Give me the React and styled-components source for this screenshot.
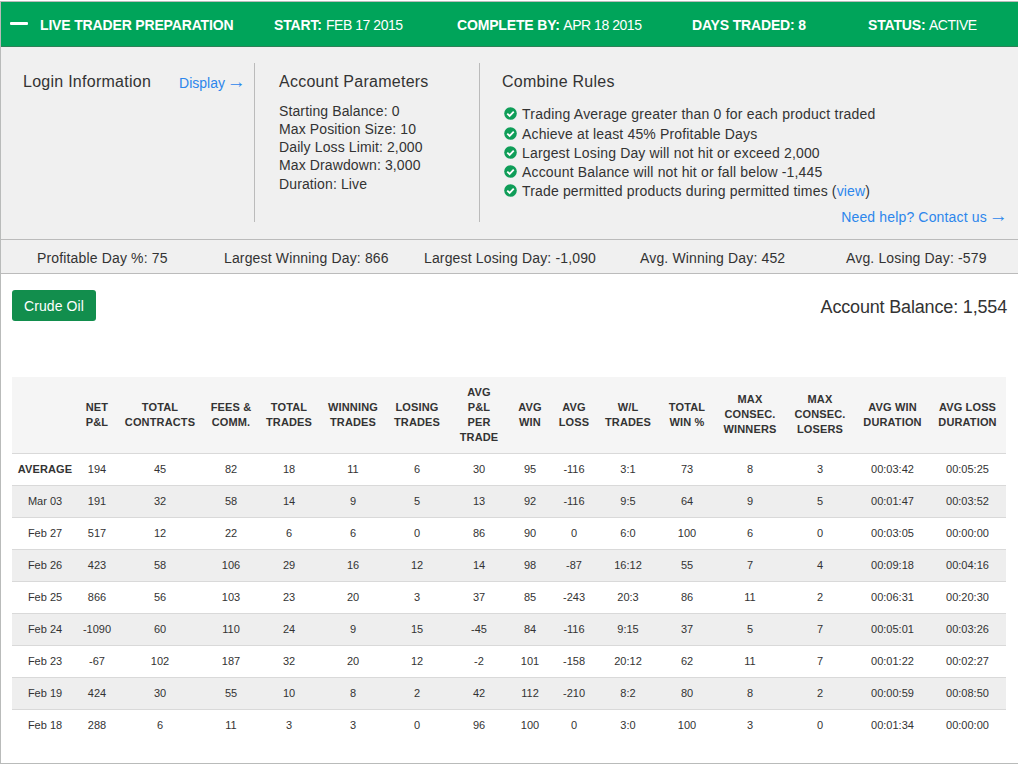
import React from 'react';
import styled, { createGlobalStyle, css } from 'styled-components';

const GlobalStyle = createGlobalStyle`
    * {
        box-sizing: border-box;
    }
    body {
        margin: 0;
        background: #fff;
        color: #333;
        font-family: "Liberation Sans", Arial, sans-serif;
        font-size: 14px;
        letter-spacing: 0.15px;
    }
`;

const Panel = styled.div`
    height: 763px;
    margin-top: 1px;
    border: 1px solid #b9bbba;
    border-right: 0;
    background: #fff;
`;

const TopBar = styled.div`
    display: flex;
    align-items: center;
    height: 45px;
    background: #00a45a;
    border-bottom: 1px solid #2d8157;
    color: #fff;
    white-space: nowrap;
`;

const Collapse = styled.div`
    width: 18px;
    height: 3px;
    margin: 0 12px 1px 9px;
    border-radius: 1px;
    background: #fff;
`;

const TopItem = styled.div`
    width: ${props => props.width}px;
    padding-top: 2px;
    letter-spacing: -0.46px;
    b {
        margin-right: 0.8px;
        letter-spacing: -0.16px;
    }
`;

const Info = styled.div`
    display: flex;
    height: 192px;
    padding: 16px 0 17px;
    background: #f0f0f0;
`;

const Column = styled.div`
    padding-top: 10px;
    line-height: 18.2px;
    ${props => props.divider && css`
        border-right: 1px solid #bbb;
    `}
`;

const LoginColumn = styled(Column)`
    display: flex;
    width: 254px;
    padding-left: 22px;
`;

const ParamsColumn = styled(Column)`
    width: 225px;
    padding-left: 24px;
`;

const RulesColumn = styled(Column)`
    flex: 1;
    padding-left: 22px;
`;

const Title = styled.div`
    font-size: 16px;
    line-height: 18px;
    letter-spacing: 0.26px;
`;

const Link = styled.a`
    color: #2c86ec;
`;

const DisplayLink = styled(Link)`
    margin: 1px 0 0 28px;
    letter-spacing: 0;
    white-space: nowrap;
`;

const Arrow = styled.span`
    margin-left: -2px;
    font-size: 19px;
    line-height: 0;
`;

const Params = styled.div`
    margin-top: 10.85px;
    letter-spacing: 0.12px;
`;

const Rules = styled.div`
    margin-top: 13.8px;
    padding-left: 2px;
`;

const Rule = styled.div`
    display: flex;
    align-items: center;
    height: 19.25px;
    letter-spacing: 0.16px;
    &:first-child {
        letter-spacing: 0.22px;
    }
    svg {
        margin: 0 5px 1px 0;
    }
`;

const Help = styled.div`
    margin-top: 7px;
    padding-right: 10px;
    text-align: right;
`;

const StatBar = styled.div`
    display: flex;
    align-items: center;
    height: 35px;
    padding-left: 36px;
    border-top: 1px solid #bbb;
    border-bottom: 1px solid #bbb;
    background: #f0f0f0;
`;

const Stat = styled.div`
    width: ${props => props.width}px;
    padding-top: 2px;
    white-space: nowrap;
`;

const Products = styled.div`
    display: flex;
    justify-content: space-between;
    height: 103px;
    padding: 16px 11px 0;
`;

const ProductButton = styled.button`
    width: 84px;
    height: 31px;
    padding: 0;
    border: 0;
    border-radius: 3px;
    background: #128e4d;
    color: #fff;
    font: inherit;
    letter-spacing: 0.1px;
`;

const Balance = styled.div`
    padding-top: 7px;
    font-size: 18px;
    line-height: 20px;
    letter-spacing: -0.17px;
`;

const Table = styled.table`
    width: 994px;
    margin-left: 11px;
    table-layout: fixed;
    border-collapse: separate;
    border-spacing: 0;
    font-size: 11px;
    text-align: center;
`;

const Col = styled.col`
    width: ${props => props.width}px;
`;

const HeadCell = styled.th`
    height: 76px;
    padding: 0 0 ${props => (props.lines === 3 ? 1 : 0)}px;
    background: #f5f5f5;
    line-height: 15px;
    letter-spacing: 0.15px;
    white-space: pre;
`;

const Row = styled.tr`
    background: ${props => (props.striped ? '#eee' : '#fff')};
`;

const Cell = styled.td`
    height: 32px;
    padding: 0;
    border-top: 1px solid #d9d9d9;
    line-height: 15px;
    letter-spacing: 0;
    ${props => props.heavy && css`
        font-weight: bold;
        letter-spacing: 0.1px;
    `}
`;

const Check = () => (
    <svg width="13" height="13" viewBox="0 0 12 12">
        <circle cx="6" cy="6" r="5.8" fill="#0f9d58" />
        <path d="M3 6.1 L5.2 8.2 L9 4.3" fill="none" stroke="#fff" strokeWidth="1.7" />
    </svg>
);

const columns = [
    [66, ''],
    [38, 'NET\nP&L'],
    [88, 'TOTAL\nCONTRACTS'],
    [54, 'FEES &\nCOMM.'],
    [62, 'TOTAL\nTRADES'],
    [66, 'WINNING\nTRADES'],
    [62, 'LOSING\nTRADES'],
    [62, 'AVG\nP&L\nPER\nTRADE'],
    [40, 'AVG\nWIN'],
    [48, 'AVG\nLOSS'],
    [60, 'W/L\nTRADES'],
    [58, 'TOTAL\nWIN %'],
    [68, 'MAX\nCONSEC.\nWINNERS'],
    [72, 'MAX\nCONSEC.\nLOSERS'],
    [73, 'AVG WIN\nDURATION'],
    [77, 'AVG LOSS\nDURATION'],
];

const days = [
    ['AVERAGE', 194, 45, 82, 18, 11, 6, 30, 95, -116, '3:1', 73, 8, 3, '00:03:42', '00:05:25'],
    ['Mar 03', 191, 32, 58, 14, 9, 5, 13, 92, -116, '9:5', 64, 9, 5, '00:01:47', '00:03:52'],
    ['Feb 27', 517, 12, 22, 6, 6, 0, 86, 90, 0, '6:0', 100, 6, 0, '00:03:05', '00:00:00'],
    ['Feb 26', 423, 58, 106, 29, 16, 12, 14, 98, -87, '16:12', 55, 7, 4, '00:09:18', '00:04:16'],
    ['Feb 25', 866, 56, 103, 23, 20, 3, 37, 85, -243, '20:3', 86, 11, 2, '00:06:31', '00:20:30'],
    ['Feb 24', -1090, 60, 110, 24, 9, 15, -45, 84, -116, '9:15', 37, 5, 7, '00:05:01', '00:03:26'],
    ['Feb 23', -67, 102, 187, 32, 20, 12, -2, 101, -158, '20:12', 62, 11, 7, '00:01:22', '00:02:27'],
    ['Feb 19', 424, 30, 55, 10, 8, 2, 42, 112, -210, '8:2', 80, 8, 2, '00:00:59', '00:08:50'],
    ['Feb 18', 288, 6, 11, 3, 3, 0, 96, 100, 0, '3:0', 100, 3, 0, '00:01:34', '00:00:00'],
];

const params = [
    'Starting Balance: 0',
    'Max Position Size: 10',
    'Daily Loss Limit: 2,000',
    'Max Drawdown: 3,000',
    'Duration: Live',
];

const rules = [
    'Trading Average greater than 0 for each product traded',
    'Achieve at least 45% Profitable Days',
    'Largest Losing Day will not hit or exceed 2,000',
    'Account Balance will not hit or fall below -1,445',
    <>Trade permitted products during permitted times (<Link>view</Link>)</>,
];

export default function App() {
    return <>
        <GlobalStyle />
        <Panel>
            <TopBar>
                <Collapse />
                <TopItem width={234}><b>LIVE TRADER PREPARATION</b></TopItem>
                <TopItem width={183}><b>START:</b> FEB 17 2015</TopItem>
                <TopItem width={235}><b>COMPLETE BY:</b> APR 18 2015</TopItem>
                <TopItem width={176}><b>DAYS TRADED: 8</b></TopItem>
                <TopItem width={140}><b>STATUS:</b> ACTIVE</TopItem>
            </TopBar>
            <Info>
                <LoginColumn divider>
                    <Title>Login Information</Title>
                    <DisplayLink>Display <Arrow>→</Arrow></DisplayLink>
                </LoginColumn>
                <ParamsColumn divider>
                    <Title>Account Parameters</Title>
                    <Params>
                        {params.map(text => <div key={text}>{text}</div>)}
                    </Params>
                </ParamsColumn>
                <RulesColumn>
                    <Title>Combine Rules</Title>
                    <Rules>
                        {rules.map((rule, i) => <Rule key={i}><Check /><span>{rule}</span></Rule>)}
                    </Rules>
                    <Help><Link>Need help? Contact us <Arrow>→</Arrow></Link></Help>
                </RulesColumn>
            </Info>
            <StatBar>
                <Stat width={187}>Profitable Day %: 75</Stat>
                <Stat width={200}>Largest Winning Day: 866</Stat>
                <Stat width={216}>Largest Losing Day: -1,090</Stat>
                <Stat width={206}>Avg. Winning Day: 452</Stat>
                <Stat width={150}>Avg. Losing Day: -579</Stat>
            </StatBar>
            <Products>
                <ProductButton>Crude Oil</ProductButton>
                <Balance>Account Balance: 1,554</Balance>
            </Products>
            <Table>
                <colgroup>
                    {columns.map(([width], i) => <Col key={i} width={width} />)}
                </colgroup>
                <thead>
                    <tr>
                        {columns.map(([, label], i) =>
                            <HeadCell key={i} lines={label.split('\n').length}>{label}</HeadCell>
                        )}
                    </tr>
                </thead>
                <tbody>
                    {days.map((day, i) =>
                        <Row key={day[0]} striped={i % 2 === 1}>
                            {day.map((value, j) => <Cell key={j} heavy={i === 0 && j === 0}>{value}</Cell>)}
                        </Row>
                    )}
                </tbody>
            </Table>
        </Panel>
    </>;
}
